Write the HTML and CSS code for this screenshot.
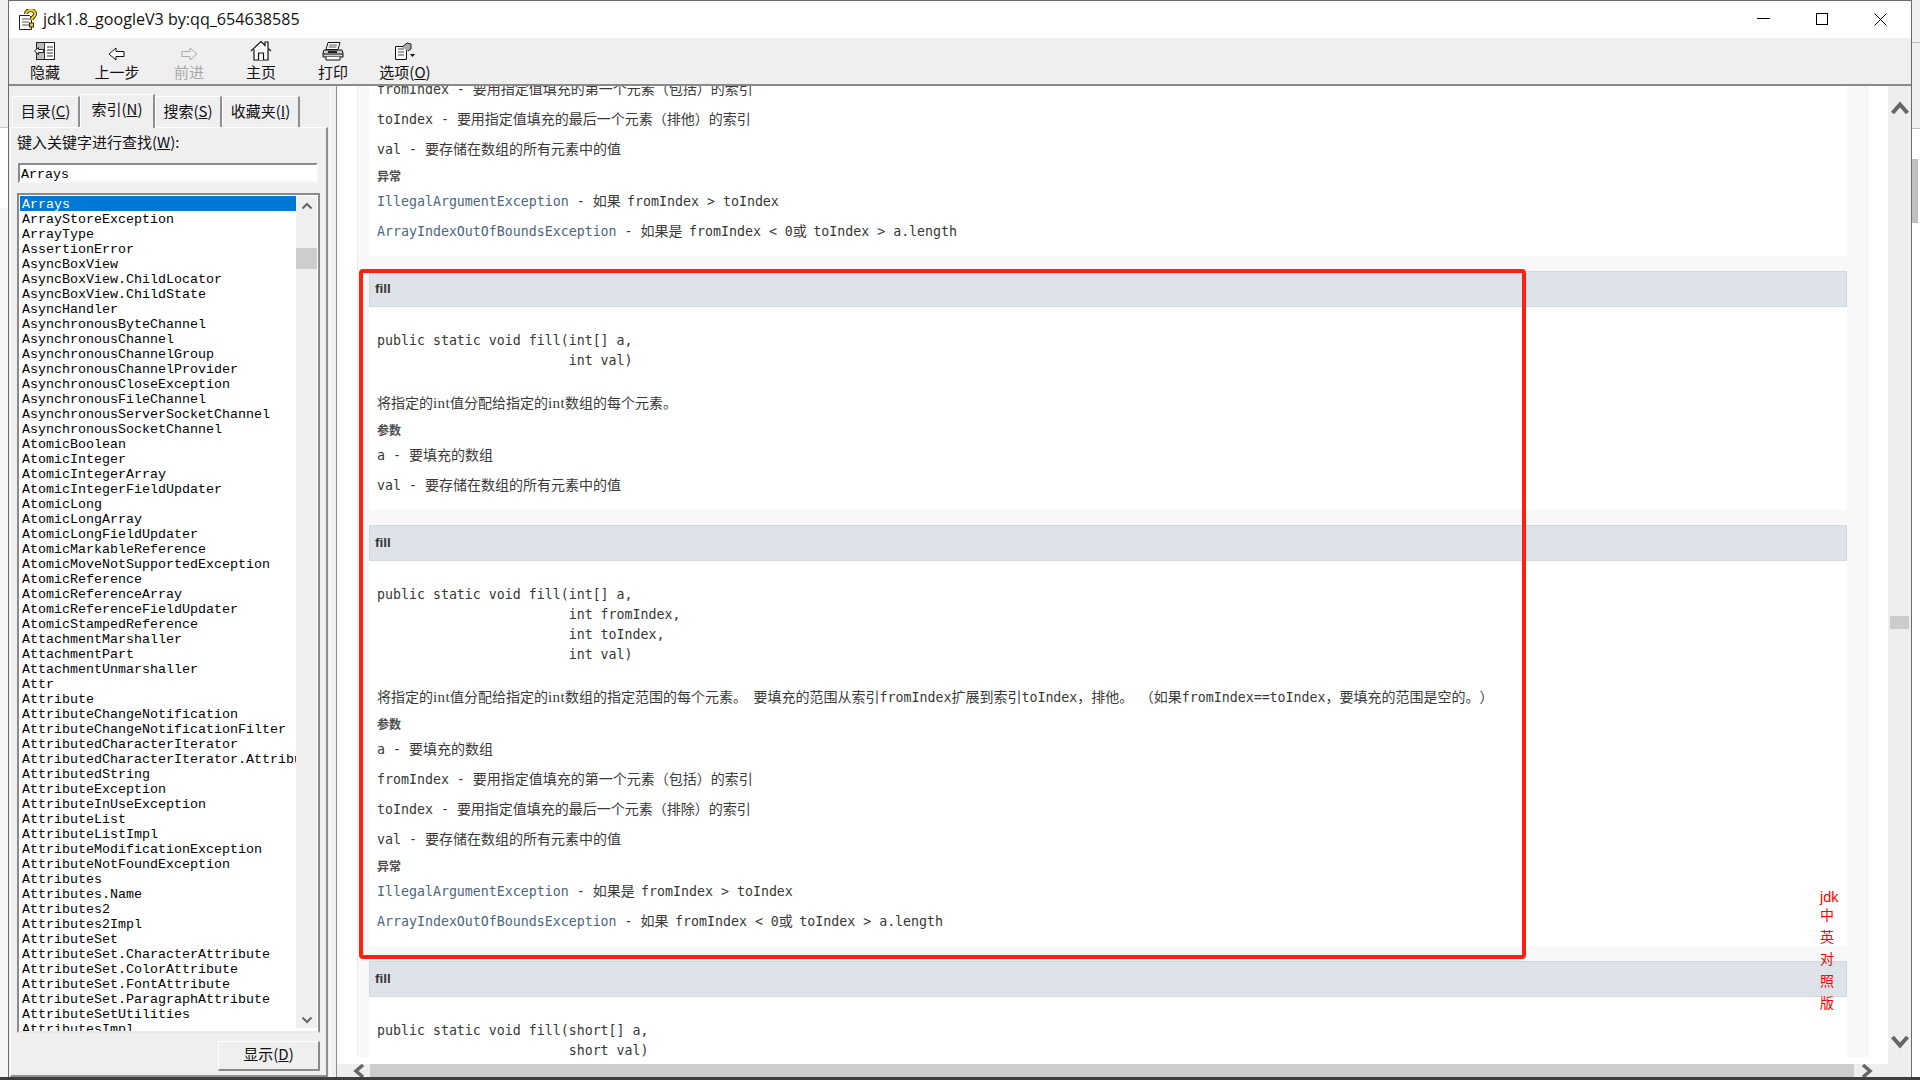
FILE: index.html
```html
<!DOCTYPE html>
<html lang="zh">
<head>
<meta charset="utf-8">
<title>jdk1.8_googleV3 by:qq_654638585</title>
<link rel="stylesheet" href="styles.css">
</head>
<body>
<div class="screen">
  <div class="desk desk-left"><div class="desk-a"></div><div class="desk-b"></div><div class="desk-c"></div></div>
  <div class="window">
    <header class="titlebar">
      <svg class="appicon" width="20" height="22" viewBox="0 0 20 22"><path d="M1.5 6.5h10l2 2v12h-12z" fill="#fff" stroke="#222"/><path d="M4 10h7M4 13h7M4 16h7" stroke="#555"/><path d="M8 5c0-5 9-5.500 9 0 0 3-3.500 3-3.500 6" fill="none" stroke="#222" stroke-width="4"/><path d="M8 5c0-5 9-5.500 9 0 0 3-3.500 3-3.500 6" fill="none" stroke="#f2d60a" stroke-width="2.200"/><rect x="11.500" y="14" width="4" height="4" fill="#f2d60a" stroke="#222"/></svg>
      <span class="apptitle">jdk1.8_googleV3 by:qq_654638585</span>
      <div class="winctl">
        <span class="winbtn"><svg width="13" height="13" viewBox="0 0 13 13"><path d="M0 5.500h13" stroke="#000"/></svg></span>
        <span class="winbtn"><svg width="13" height="13" viewBox="0 0 13 13"><rect x=".5" y=".5" width="11" height="11" fill="none" stroke="#000"/></svg></span>
        <span class="winbtn"><svg width="13" height="13" viewBox="0 0 13 13"><path d="M.5.500l12 12M12.500.500l-12 12" stroke="#000"/></svg></span>
      </div>
    </header>
    <nav class="toolbar">
      <div class="tool"><svg class="ticon" width="22" height="20" viewBox="0 0 22 20"><rect x="2.500" y="1.500" width="18" height="17" fill="#fff" stroke="#222"/><rect x="3" y="2" width="7" height="16" fill="#bbb"/><path d="M10.500 2v16M13 6h6M13 9h6M13 12h6M13 15h6" stroke="#333"/><path d="M0.500 10l4-3.500v2h5v3h-5v2z" fill="#fff" stroke="#222"/></svg><span>隐藏</span></div>
      <div class="tool"><svg class="ticon" width="18" height="14" viewBox="0 0 18 14"><path d="M1 7l7-6v3.500h8v5H8V13z" fill="#fff" stroke="#111"/></svg><span>上一步</span></div>
      <div class="tool off"><svg class="ticon" width="18" height="14" viewBox="0 0 18 14"><path d="M17 7l-7-6v3.500H2v5h8V13z" fill="#efefef" stroke="#aaa"/></svg><span>前进</span></div>
      <div class="tool"><svg class="ticon" width="22" height="21" viewBox="0 0 22 21"><path d="M1 11L11 1.500l4 4V2h3v6.500l3 2.500M4 9.500V20h14V9.500" fill="#fff" stroke="#111" stroke-width="1.200"/><path d="M8.500 20v-7h5v7" fill="#fff" stroke="#111" stroke-width="1.200"/></svg><span>主页</span></div>
      <div class="tool"><svg class="ticon" width="22" height="20" viewBox="0 0 22 20"><path d="M6 1.500h12l-2 7H4z" fill="#fff" stroke="#111"/><path d="M7 4h8M6.500 6h8" stroke="#555"/><path d="M2 9h18l1 3v4H1v-4z" fill="#ccc" stroke="#111"/><path d="M1 13h20M4 16v3h14v-3" fill="#fff" stroke="#111"/><rect x="6" y="10" width="9" height="2" fill="#222"/></svg><span>打印</span></div>
      <div class="tool"><svg class="ticon" width="22" height="20" viewBox="0 0 22 20"><path d="M1.500 5.500h9l2 2v11h-11z" fill="#fff" stroke="#111"/><path d="M4 8h6M4 11h6M4 14h6" stroke="#444"/><path d="M8 6l5-4 4 1v5l-3 2" fill="#aaa" stroke="#222"/><path d="M16 13h5l-2.500 3z" fill="#111"/></svg><span>选项(<u>O</u>)</span></div>
    </nav>
    <div class="workspace">
      <aside class="pane">
        <div class="tabs">
          <div class="tab tab-1">目录(<u>C</u>)</div>
          <div class="tab tab-2 active">索引(<u>N</u>)</div>
          <div class="tab tab-3">搜索(<u>S</u>)</div>
          <div class="tab tab-4">收藏夹(<u>I</u>)</div>
        </div>
        <div class="panel">
          <label class="findlabel">键入关键字进行查找(<u>W</u>):</label>
          <div class="findinput">Arrays</div>
          <div class="listbox">
            <ul class="items">
              <li class="sel">Arrays</li>
              <li>ArrayStoreException</li>
              <li>ArrayType</li>
              <li>AssertionError</li>
              <li>AsyncBoxView</li>
              <li>AsyncBoxView.ChildLocator</li>
              <li>AsyncBoxView.ChildState</li>
              <li>AsyncHandler</li>
              <li>AsynchronousByteChannel</li>
              <li>AsynchronousChannel</li>
              <li>AsynchronousChannelGroup</li>
              <li>AsynchronousChannelProvider</li>
              <li>AsynchronousCloseException</li>
              <li>AsynchronousFileChannel</li>
              <li>AsynchronousServerSocketChannel</li>
              <li>AsynchronousSocketChannel</li>
              <li>AtomicBoolean</li>
              <li>AtomicInteger</li>
              <li>AtomicIntegerArray</li>
              <li>AtomicIntegerFieldUpdater</li>
              <li>AtomicLong</li>
              <li>AtomicLongArray</li>
              <li>AtomicLongFieldUpdater</li>
              <li>AtomicMarkableReference</li>
              <li>AtomicMoveNotSupportedException</li>
              <li>AtomicReference</li>
              <li>AtomicReferenceArray</li>
              <li>AtomicReferenceFieldUpdater</li>
              <li>AtomicStampedReference</li>
              <li>AttachmentMarshaller</li>
              <li>AttachmentPart</li>
              <li>AttachmentUnmarshaller</li>
              <li>Attr</li>
              <li>Attribute</li>
              <li>AttributeChangeNotification</li>
              <li>AttributeChangeNotificationFilter</li>
              <li>AttributedCharacterIterator</li>
              <li>AttributedCharacterIterator.Attribute</li>
              <li>AttributedString</li>
              <li>AttributeException</li>
              <li>AttributeInUseException</li>
              <li>AttributeList</li>
              <li>AttributeListImpl</li>
              <li>AttributeModificationException</li>
              <li>AttributeNotFoundException</li>
              <li>Attributes</li>
              <li>Attributes.Name</li>
              <li>Attributes2</li>
              <li>Attributes2Impl</li>
              <li>AttributeSet</li>
              <li>AttributeSet.CharacterAttribute</li>
              <li>AttributeSet.ColorAttribute</li>
              <li>AttributeSet.FontAttribute</li>
              <li>AttributeSet.ParagraphAttribute</li>
              <li>AttributeSetUtilities</li>
              <li>AttributesImpl</li>
            </ul>
            <div class="listscroll">
              <svg width="12" height="8" viewBox="0 0 12 8"><path d="M1.500 6.500L6 2l4.500 4.500" fill="none" stroke="#666" stroke-width="2"/></svg>
              <div class="listthumb"></div>
              <svg class="listdown" width="12" height="8" viewBox="0 0 12 8"><path d="M1.500 1.500L6 6l4.500-4.500" fill="none" stroke="#666" stroke-width="2"/></svg>
            </div>
          </div>
          <div class="panelfoot"><button class="showbtn">显示(<u>D</u>)</button></div>
        </div>
      </aside>
      <div class="splitter"></div>
      <main class="main">
        <div class="docarea">
          <div class="docview">
            <div class="doc">
              <section class="body body-first">
                <p class="line"><code>fromIndex - </code>要用指定值填充的第一个元素（包括）的索引</p>
                <p class="line"><code>toIndex - </code>要用指定值填充的最后一个元素（排他）的索引</p>
                <p class="line"><code>val - </code>要存储在数组的所有元素中的值</p>
                <h4 class="label">异常</h4>
                <p class="line first"><a>IllegalArgumentException</a><code> - </code>如果 <code>fromIndex &gt; toIndex</code></p>
                <p class="line"><a>ArrayIndexOutOfBoundsException</a><code> - </code>如果是 <code>fromIndex &lt; 0</code>或 <code>toIndex &gt; a.length</code></p>
              </section>
              <h3 class="head">fill</h3>
              <section class="body">
<pre class="sig">public static void fill(int[] a,
                        int val)</pre>
                <p class="desc">将指定的<b>int</b>值分配给指定的<b>int</b>数组的每个元素。</p>
                <h4 class="label">参数</h4>
                <p class="line first"><code>a - </code>要填充的数组</p>
                <p class="line"><code>val - </code>要存储在数组的所有元素中的值</p>
              </section>
              <h3 class="head">fill</h3>
              <section class="body">
<pre class="sig">public static void fill(int[] a,
                        int fromIndex,
                        int toIndex,
                        int val)</pre>
                <p class="desc">将指定的<b>int</b>值分配给指定的<b>int</b>数组的指定范围的每个元素。 要填充的范围从索引<code>fromIndex</code>扩展到索引<code>toIndex</code>，排他。 （如果<code>fromIndex==toIndex</code>，要填充的范围是空的。）</p>
                <h4 class="label">参数</h4>
                <p class="line first"><code>a - </code>要填充的数组</p>
                <p class="line"><code>fromIndex - </code>要用指定值填充的第一个元素（包括）的索引</p>
                <p class="line"><code>toIndex - </code>要用指定值填充的最后一个元素（排除）的索引</p>
                <p class="line"><code>val - </code>要存储在数组的所有元素中的值</p>
                <h4 class="label">异常</h4>
                <p class="line first"><a>IllegalArgumentException</a><code> - </code>如果是 <code>fromIndex &gt; toIndex</code></p>
                <p class="line"><a>ArrayIndexOutOfBoundsException</a><code> - </code>如果 <code>fromIndex &lt; 0</code>或 <code>toIndex &gt; a.length</code></p>
              </section>
              <h3 class="head">fill</h3>
              <section class="body">
<pre class="sig">public static void fill(short[] a,
                        short val)</pre>
              </section>
            </div>
          </div>
          <div class="hscroll">
            <div class="hbtn hbtn-l"><svg width="14" height="14" viewBox="0 0 14 14"><path d="M11 1L4 7l7 6" fill="none" stroke="#666" stroke-width="3.500"/></svg></div>
            <div class="hthumb"></div>
            <div class="hbtn hbtn-r"><svg width="14" height="14" viewBox="0 0 14 14"><path d="M3 1l7 6-7 6" fill="none" stroke="#666" stroke-width="3.500"/></svg></div>
          </div>
        </div>
        <div class="vscroll">
          <svg width="18" height="14" viewBox="0 0 18 14"><path d="M1.500 12L9 3.500l7.500 8.500" fill="none" stroke="#666" stroke-width="4"/></svg>
          <div class="vthumb"></div>
          <svg width="18" height="14" viewBox="0 0 18 14"><path d="M1.500 2L9 10.500 16.500 2" fill="none" stroke="#666" stroke-width="4"/></svg>
        </div>
        <div class="redbox"></div>
        <div class="sidelink"><span class="jdk">jdk</span><span>中</span><span>英</span><span>对</span><span>照</span><span>版</span></div>
      </main>
    </div>
  </div>
  <div class="desk desk-right"><div class="dr-a"></div><div class="dr-b"></div><div class="dr-c"></div></div>
</div>
<div class="floorline"></div>
</body>
</html>
```
FILE: styles.css
```css
html, body { margin: 0; padding: 0; height: 100%; overflow: hidden; background: #fff; }
body { display: flex; flex-direction: column; height: 1080px; font-family: "Noto Sans CJK SC", "Liberation Sans", sans-serif; font-size: 15px; color: #111; }
p, h3, h4, pre, ul { margin: 0; padding: 0; }
u { text-underline-offset: 1px; }

.screen { display: flex; height: 1077px; }
.floorline { height: 3px; background: #3e3e3e; }

.desk { width: 8px; flex: none; display: flex; flex-direction: column; }
.desk-a { height: 128px; background: #f0f0f0; border-bottom: 1px solid #c8c8c8; box-sizing: border-box; }
.desk-b { height: 80px; background: #fff; }
.desk-c { flex: 1; background: #f6f6f6; }
.desk-right { width: 8px; }
.dr-a { height: 42px; background: #f0f0f0; border-bottom: 1px solid #c0c0c0; }
.dr-b { height: 85px; background: #f0f0f0; border-bottom: 1px solid #c0c0c0; }
.dr-c { flex: 1; background: linear-gradient(#fff 30px, #c0c0c0 30px, #c0c0c0 94px, #fff 94px); margin-right: 2px; }

.window { flex: 1; min-width: 0; display: flex; flex-direction: column; border: 1px solid #6b6b6b; border-width: 1px 1px 0 1px; background: #efefef; box-sizing: border-box; }

.titlebar { height: 37px; flex: none; background: #fff; display: flex; align-items: center; }
.appicon { margin-left: 9px; flex: none; }
.apptitle { margin: -2px 0 0 5px; font-family: "Open Sans", "Liberation Sans", sans-serif; font-size: 16.100px; color: #111; }
.winctl { margin-left: auto; display: flex; padding-right: 1px; }
.winbtn { width: 58.500px; height: 37px; display: flex; align-items: center; justify-content: center; }

.toolbar { height: 48px; flex: none; background: #efefef; border-bottom: 2px solid #8a8a8a; box-sizing: border-box; display: flex; }
.tool { width: 72px; display: flex; flex-direction: column; align-items: center; justify-content: flex-end; line-height: 18px; font-size: 15px; color: #111; }
.tool span { margin-bottom: 2px; height: 19px; }
.ticon { margin-bottom: 2px; flex: none; }
.off { color: #a8a8a8; }

.workspace { flex: 1; min-height: 0; display: flex; }

.pane { width: 321px; flex: none; display: flex; flex-direction: column; background: #efefef; }
.tabs { height: 41px; flex: none; display: flex; align-items: flex-end; padding-left: 3px; box-sizing: border-box; }
.tab { height: 31px; line-height: 28px; text-align: center; box-sizing: border-box; border: 1px solid #fff; border-right: 2px solid #8e8e8e; border-bottom: 0; font-size: 15px; }
.tab-1 { width: 68px; }
.tab-2 { width: 75px; height: 34px; line-height: 28px; background: #efefef; margin-bottom: -1px; position: relative; z-index: 1; }
.tab-3 { width: 67px; }
.tab-4 { width: 78px; }

.panel { flex: 1; min-height: 0; margin: 0 2px 0 1px; border: 1px solid #fff; border-right: 2px solid #8e8e8e; border-bottom: 2px solid #8e8e8e; display: flex; flex-direction: column; padding: 0 0 0 6px; box-sizing: border-box; }
.findlabel { display: block; height: 20px; line-height: 20px; margin: 4px 0 0 0; font-size: 15px; }
.findinput { width: 300px; height: 20px; margin: 11px 0 0 1px; box-sizing: border-box; border: 2px solid #8a8a8a; border-right-color: #f8f8f8; border-bottom-color: #f8f8f8; background: #fff; font-family: "Liberation Mono", monospace; font-size: 13.330px; line-height: 20px; padding-left: 1px; color: #000; }
.listbox { width: 303px; height: 840px; margin-top: 10px; box-sizing: border-box; border: 2px solid #8a8a8a; border-bottom-color: #e8e8e8; padding: 1px 1px 0 1px; background: #fff; display: flex; overflow: hidden; }
.items { list-style: none; width: 276px; flex: none; overflow: hidden; font-family: "Liberation Mono", monospace; font-size: 13.330px; line-height: 18px; color: #000; }
.items li { height: 15px; padding-left: 2px; white-space: nowrap; }
.items .sel { background: #0078d7; color: #fff; }
.listscroll { flex: 1; background: #f0f0f0; display: flex; flex-direction: column; align-items: center; padding-top: 6px; box-sizing: border-box; margin-bottom: 3px; }
.listthumb { width: 100%; height: 21px; margin-top: 38px; background: #cdcdcd; }
.listdown { margin-top: auto; margin-bottom: 4px; }
.panelfoot { display: flex; margin-top: 8px; padding-left: 201px; }
.showbtn { width: 102px; height: 30px; box-sizing: border-box; background: #efefef; border: 1px solid #fff; border-right: 2px solid #8a8a8a; border-bottom: 2px solid #8a8a8a; font: inherit; font-size: 15px; line-height: 20px; padding: 0 0 4px; color: #111; }

.splitter { width: 7px; flex: none; box-sizing: border-box; border-left: 1px solid #fff; border-right: 1px solid #8e8e8e; background: #efefef; }

.main { flex: 1; min-width: 0; display: flex; position: relative; background: #fff; }
.docarea { flex: 1; min-width: 0; display: flex; flex-direction: column; }
.docview { flex: 1; min-height: 0; overflow: hidden; padding-left: 20px; }
.doc { height: 100%; background: #f8f8f8; border-left: 1px solid #eee; border-right: 1px solid #eee; padding: 0 20px 0 11px; width: 1478px; }
.body { background: #fff; padding: 0 8px 15px 8px; margin-bottom: 15px; font-family: "DejaVu Sans Mono", "Noto Sans CJK SC", monospace; font-size: 14px; line-height: 20px; color: #3a3a3a; text-spacing-trim: space-all; }
.body-first { margin-top: -7px; }
.line, .desc { height: 20px; line-height: 20px; margin-top: 10px; white-space: nowrap; word-spacing: -2px; }
.line.first { margin-top: 0; }
.body-first .line:first-child { margin-top: 0; }
code, .sig { font-family: "DejaVu Sans Mono", monospace; font-size: 13.280px; color: #353833; word-spacing: 0; }
a { font-family: "DejaVu Sans Mono", monospace; font-size: 13.280px; color: #4a6782; word-spacing: 0; }
.desc b { font-family: "Liberation Serif", serif; font-weight: 400; font-size: 15px; letter-spacing: .4px; }
.label { height: 16px; line-height: 16px; font-family: "Noto Sans CJK SC", sans-serif; font-size: 12px; font-weight: 700; margin: 9px 0 7px; color: #4e4e4e; }
.head { height: 36px; box-sizing: border-box; background: #dee3e9; border: 1px solid #d0d9e0; font-family: "Liberation Sans", sans-serif; font-size: 13.500px; font-weight: 700; line-height: 34px; padding-left: 5px; color: #353833; }
.sig { padding-top: 24px; line-height: 20px; }
.desc { margin-top: 22px; }

.hscroll { height: 13px; flex: none; display: flex; background: #eee; }
.hbtn { flex: none; display: flex; align-items: center; overflow: hidden; }
.hbtn-l { width: 33px; padding-left: 15px; box-sizing: border-box; }
.hbtn-r { width: 34px; padding-left: 6px; box-sizing: border-box; }
.hthumb { flex: 1; background: #cdcdcd; }

.vscroll { width: 23px; flex: none; background: #eee; display: flex; flex-direction: column; align-items: center; justify-content: space-between; position: relative; padding: 15px 0 28px; box-sizing: border-box; }
.vthumb { width: 19px; height: 13px; background: #ccc; position: absolute; top: 530px; left: 2px; }

.redbox { position: absolute; left: 22px; top: 183px; width: 1167px; height: 690px; box-sizing: border-box; border: 4px solid #ff2010; border-radius: 4px; pointer-events: none; }
.sidelink { position: absolute; left: 1483px; top: 800px; display: flex; flex-direction: column; font-family: "Noto Sans CJK SC", sans-serif; font-size: 14px; line-height: 22px; color: #f00; }
.sidelink span { height: 22px; }
.sidelink .jdk { height: 17px; font-family: "Liberation Sans", sans-serif; font-size: 14.500px; }
```
